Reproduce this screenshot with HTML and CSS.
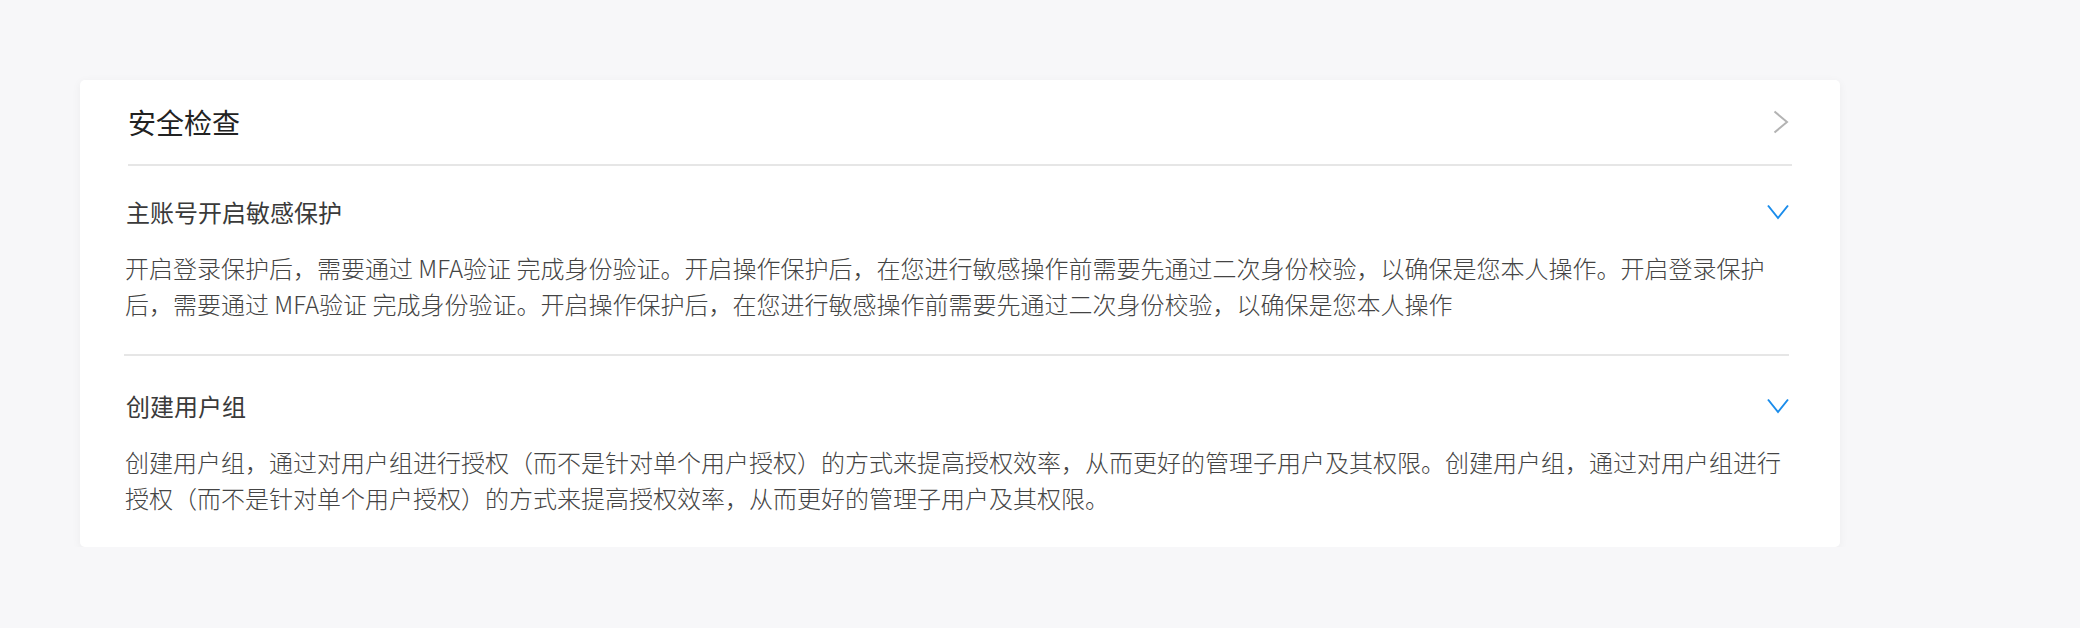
FILE: index.html
```html
<!DOCTYPE html>
<html lang="zh-CN">
<head>
<meta charset="utf-8">
<title>安全检查</title>
<link rel="stylesheet" href="styles.css">
</head>
<body>
<div class="page">
  <section class="card">
    <header class="card-head">
      <h2 class="card-title">安全检查</h2>
      <svg class="arrow-right" width="16" height="24" viewBox="0 0 16 24"><path d="M1.5 1.5 L14 12 L1.5 22.5" fill="none" stroke="#b3b3b3" stroke-width="2"/></svg>
    </header>
    <div class="items">
      <div class="item">
        <div class="item-head">
          <h3 class="item-title">主账号开启敏感保护</h3>
          <svg class="arrow-down" width="22" height="16" viewBox="0 0 22 16"><path d="M1 1.5 L11 14 L21 1.5" fill="none" stroke="#1a8ceb" stroke-width="2"/></svg>
        </div>
        <p class="item-desc">开启登录保护后，需要通过 MFA验证 完成身份验证。开启操作保护后，在您进行敏感操作前需要先通过二次身份校验，以确保是您本人操作。开启登录保护后，需要通过 MFA验证 完成身份验证。开启操作保护后，在您进行敏感操作前需要先通过二次身份校验，以确保是您本人操作</p>
      </div>
      <div class="item">
        <div class="item-head">
          <h3 class="item-title">创建用户组</h3>
          <svg class="arrow-down" width="22" height="16" viewBox="0 0 22 16"><path d="M1 1.5 L11 14 L21 1.5" fill="none" stroke="#1a8ceb" stroke-width="2"/></svg>
        </div>
        <p class="item-desc">创建用户组，通过对用户组进行授权（而不是针对单个用户授权）的方式来提高授权效率，从而更好的管理子用户及其权限。创建用户组，通过对用户组进行授权（而不是针对单个用户授权）的方式来提高授权效率，从而更好的管理子用户及其权限。</p>
      </div>
    </div>
  </section>
</div>
</body>
</html>
```

FILE: styles.css
```css
* { box-sizing: border-box; }

body {
  margin: 0;
  background: #f7f7f9;
  font-family: "Noto Sans CJK SC", "Noto Sans", sans-serif;
}

.page {
  padding: 80px 240px 0 80px;
}

.card {
  width: 1760px;
  background: #ffffff;
  border-radius: 5px;
  box-shadow: 0 2px 10px rgba(0, 0, 0, 0.05);
  padding: 22px 48px 31px 44px;
}

.card-head {
  display: flex;
  align-items: center;
  justify-content: space-between;
  margin-left: 4px;
  padding-bottom: 22px;
  border-bottom: 2px solid #e6e6e6;
}

.card-title {
  margin: 0;
  font-size: 28px;
  line-height: 40px;
  font-weight: 400;
  color: #222222;
}

.arrow-right {
  display: block;
  margin-right: 3px;
}

.items {
  display: flex;
  flex-direction: column;
  margin-right: 3px;
}

.item {
  padding: 34px 0 32px;
}

.item:first-child {
  padding-top: 30px;
}

.item + .item {
  border-top: 2px solid #e6e6e6;
  padding-bottom: 0;
}

.item-head {
  display: flex;
  align-items: center;
  justify-content: space-between;
  padding-left: 2px;
}

.item-title {
  margin: 0;
  font-size: 24px;
  line-height: 32px;
  font-weight: 400;
  color: #3a3a3a;
}

.item-desc {
  margin: 22px 0 0;
  padding-left: 1px;
  font-size: 24px;
  line-height: 36px;
  font-weight: 300;
  color: #444444;
}
```
